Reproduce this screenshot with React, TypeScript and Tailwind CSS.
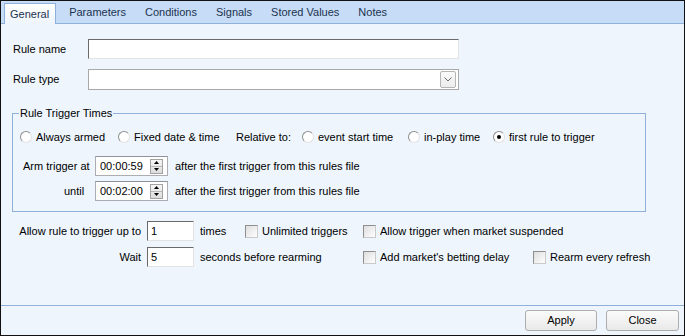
import React from "react";

const Radio = ({ checked }: { checked?: boolean }) => (
  <span className="flex h-[12px] w-[12px] shrink-0 items-center justify-center rounded-full border border-t-[#8d8d8d] border-l-[#8d8d8d] border-r-[#e2e2e2] border-b-[#e2e2e2] bg-white">
    {checked && <span className="h-[4px] w-[4px] rounded-full bg-black" />}
  </span>
);

const Check = () => (
  <span className="h-[13px] w-[13px] shrink-0 border border-t-[#8e8e8e] border-l-[#8e8e8e] border-r-[#c9c9c9] border-b-[#c9c9c9] bg-linear-to-br from-[#dedede] to-white" />
);

const RadioItem = ({ label, checked }: { label: string; checked?: boolean }) => (
  <div className="flex items-center gap-[4px]">
    <Radio checked={checked} />
    <span>{label}</span>
  </div>
);

const CheckItem = ({ label }: { label: string }) => (
  <div className="flex items-center gap-[4px]">
    <Check />
    <span>{label}</span>
  </div>
);

const Spinner = ({ value }: { value: string }) => (
  <div className="flex h-[20px] w-[73px] items-center justify-between border border-[#abadb3] border-t-[#8f949b] bg-white pl-[4px] pr-[4px]">
    <span>{value}</span>
    <div className="flex h-[15px] w-[13px] flex-col border border-[#a3a3a3] bg-linear-to-b from-[#f6f6f6] to-[#dcdcdc]">
      <div className="flex flex-1 items-center justify-center border-b border-[#b8b8b8]">
        <svg width="5" height="3" viewBox="0 0 5 3">
          <path d="M0 3 L2.5 0 L5 3 Z" fill="#000" />
        </svg>
      </div>
      <div className="flex flex-1 items-center justify-center">
        <svg width="5" height="3" viewBox="0 0 5 3">
          <path d="M0 0 L2.5 3 L5 0 Z" fill="#000" />
        </svg>
      </div>
    </div>
  </div>
);

const SunkenInput = ({ value, className }: { value?: string; className: string }) => (
  <div
    className={`flex items-center border border-t-[#6a6a6a] border-l-[#6a6a6a] border-r-[#e3e3e3] border-b-[#e3e3e3] bg-white pl-[3px] ${className}`}
  >
    {value}
  </div>
);

const tabs = ["Parameters", "Conditions", "Signals", "Stored Values", "Notes"];

export default function App() {
  return (
    <div className="flex h-[336px] w-[685px] flex-col border border-[#111] bg-[#eef5fc] font-['Liberation_Sans',Arial,sans-serif] text-[11px] leading-[13px] text-black">
      {/* tab strip */}
      <div className="flex h-[23px] items-end border-b border-[#8fb1d9] bg-[#c6dcf7] text-[#1c3350]">
        <div className="-mb-[1px] ml-[3px] mr-[3.5px] flex h-[21px] items-center border border-b-0 border-[#8fb1d9] bg-linear-to-b from-white to-[#eef5fc] pl-[5px] pr-[6px]">
          General
        </div>
        {tabs.map((t) => (
          <div key={t} className="flex h-[21px] items-center px-[9.5px]">
            {t}
          </div>
        ))}
      </div>

      {/* body */}
      <div className="flex flex-1 flex-col">
        <div className="mt-[15px] flex h-[20px] items-center">
          <span className="w-[87px] pl-[12px]">Rule name</span>
          <SunkenInput className="h-[20px] w-[371px]" />
        </div>
        <div className="mt-[10px] flex h-[21px] items-center">
          <span className="w-[87px] pl-[12px]">Rule type</span>
          <div className="flex h-[21px] w-[371px] items-center justify-end border border-[#a9a9a9] bg-white pr-[2px]">
            <div className="flex h-[17px] w-[16px] items-center justify-center rounded-[2px] border border-[#b5b5b5] bg-linear-to-b from-[#fafafa] to-[#ececec]">
              <svg width="8" height="5" viewBox="0 0 8 5">
                <path d="M0.5 0.5 L4 4 L7.5 0.5" fill="none" stroke="#6a6a6a" strokeWidth="1" />
              </svg>
            </div>
          </div>
        </div>

        <fieldset className="ml-[11px] mt-[17px] w-[634px] border border-[#8fb1d9] pb-[10px]">
          <legend className="ml-[6px] px-[1px] leading-[13px]">Rule Trigger Times</legend>
          <div className="ml-[7px] mt-[9px] grid h-[16px] grid-cols-[98px_118px_66px_106px_85px_auto] items-center">
            <RadioItem label="Always armed" />
            <RadioItem label="Fixed date & time" />
            <span>Relative to:</span>
            <RadioItem label="event start time" />
            <RadioItem label="in-play time" />
            <RadioItem label="first rule to trigger" checked />
          </div>
          <div className="mt-[11px] flex h-[20px] items-center">
            <span className="w-[82px] pl-[10px]">Arm trigger at</span>
            <Spinner value="00:00:59" />
            <span className="ml-[7px]">after the first trigger from this rules file</span>
          </div>
          <div className="mt-[5px] flex h-[20px] items-center">
            <span className="w-[82px] pl-[51px]">until</span>
            <Spinner value="00:02:00" />
            <span className="ml-[7px]">after the first trigger from this rules file</span>
          </div>
        </fieldset>

        <div className="mt-[9px] grid grid-cols-[146px_47px_51px_118px_170px_auto] grid-rows-[20px_20px] items-center gap-y-[6px]">
          <span className="pr-[6px] text-right">Allow rule to trigger up to</span>
          <SunkenInput value="1" className="h-[20px]" />
          <span className="pl-[6px]">times</span>
          <CheckItem label="Unlimited triggers" />
          <div className="col-span-2">
            <CheckItem label="Allow trigger when market suspended" />
          </div>

          <span className="pr-[6px] text-right">Wait</span>
          <SunkenInput value="5" className="h-[20px]" />
          <span className="col-span-2 pl-[6px]">seconds before rearming</span>
          <CheckItem label="Add market's betting delay" />
          <CheckItem label="Rearm every refresh" />
        </div>
      </div>

      {/* footer */}
      <div className="flex h-[30px] items-start justify-end gap-[9px] border-t border-[#8fb1d9] pr-[5px] pt-[4px]">
        <button className="h-[21px] w-[72px] rounded-[3px] border border-[#adadad] bg-linear-to-b from-[#fbfbfb] to-[#e9e9e9] text-[11px]">
          Apply
        </button>
        <button className="h-[21px] w-[73px] rounded-[3px] border border-[#adadad] bg-linear-to-b from-[#fbfbfb] to-[#e9e9e9] text-[11px]">
          Close
        </button>
      </div>
    </div>
  );
}
